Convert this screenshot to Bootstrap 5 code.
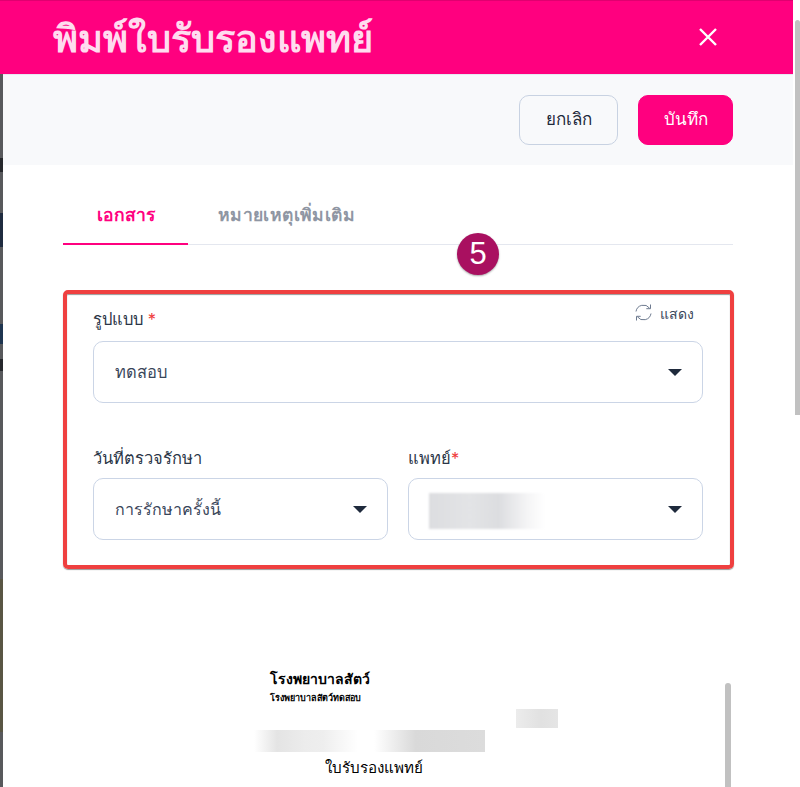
<!DOCTYPE html>
<html lang="th">
<head>
  <meta charset="UTF-8" />
  <meta name="viewport" content="width=device-width, initial-scale=1" />
  <title>พิมพ์ใบรับรองแพทย์</title>
  <link href="https://cdn.jsdelivr.net/npm/bootstrap@5.3.0/dist/css/bootstrap.min.css" rel="stylesheet" />
  <style>
    html, body { height: 787px; overflow: hidden; }
    body {
      background: #fff;
      color: #1f2a3c;
      font-family: Inter, "Noto Sans", "Liberation Sans", sans-serif;
      font-size: 16px;
    }
    .page-wrap { height: 787px; overflow: hidden; }
    .modal-col { width: 793px; flex: none; }
    .page-scroll { width: 7px; flex: none; padding: 20px 0 0 2px; }
    .page-thumb { height: 395px; background: #c1c1c1; border-radius: 3px 3px 0 0; }
    .print-head {
      height: 74px;
      background: #ff007f;
      border-top: 1px solid #e00070;
      padding: 0 76px 0 53px;
    }
    .print-title {
      font-size: 38px;
      line-height: 1;
      font-weight: 700;
      color: #ffdcef;
      margin: 0;
    }
    .close-x { border: 0; background: none; padding: 0; line-height: 0; margin-top: -2px; }
    .body-row { height: 713px; }
    .backdrop-strip {
      width: 3px;
      flex: none;
      background: linear-gradient(#58595c 0 84px, #26282c 84px 98px, #58595c 98px 139px, #1f2b3f 139px 173px, #58595c 173px 250px, #1f3550 250px 270px, #58595c 270px 285px, #26282c 285px 297px, #58595c 297px 505px, #595644 505px 658px, #58595c 658px);
    }
    .main-col { min-width: 0; flex: 1; }
    .action-bar {
      height: 91px;
      background: #f8f9fb;
      border-top: 1px solid #e6e9f2;
      padding: 20px 60px 0 0;
    }
    .btn-cancel, .btn-save {
      height: 50px;
      border-radius: 10px;
      font-size: 17px;
      font-weight: 500;
      padding: 0;
    }
    .btn-cancel { width: 99px; background: #f8f9fb; border: 1px solid #c8d2e2; color: #1f2a3c; }
    .btn-save { width: 95px; background: #ff007f; border: 1px solid #ff007f; color: #fff; }
    .btn-save:hover { background: #ff007f; color: #fff; }
    .content-area { padding: 0 60px; position: relative; }
    .tab-row { height: 80px; border-bottom: 1px solid #e4e7ef; margin: 0; }
    .tab-row .nav-link {
      height: 80px;
      border: 0;
      border-bottom: 2px solid transparent;
      border-radius: 0;
      padding: 0;
      font-size: 17.5px;
      font-weight: 700;
      color: #8f96a3;
      text-align: center;
      background: none;
      line-height: 100px;
    }
    .tab-one { width: 125px; }
    .tab-two { width: 197px; letter-spacing: .4px; }
    .tab-row .nav-link.active { color: #ff007f; border-bottom-color: #ff007f; }
    .step-badge {
      position: absolute;
      left: 454px;
      top: 68px;
      width: 42px;
      height: 42px;
      border-radius: 50%;
      background: #a91060;
      box-shadow: 0 1px 2px rgba(0,0,0,.35);
      color: #fff;
      font-family: "Liberation Sans", sans-serif;
      font-size: 31px;
      line-height: 42px;
      text-align: center;
    }
    .marked-box {
      margin-top: 45px;
      height: 279px;
      width: 671px;
      border: 4px solid #ef4040;
      border-radius: 5px;
      box-shadow: inset 0 1px 1px rgba(0,0,0,.4), 0 1px 1px rgba(0,0,0,.4);
      padding: 9px 27px 0 26px;
    }
    .field-label {
      font-size: 16.5px;
      line-height: 24px;
      color: #2b3647;
      margin: 0;
      height: 38px;
      padding-top: 4px;
    }
    .date-row .field-label { padding-top: 6px; }
    .req { color: #ef4040; }
    .show-link { font-size: 14px; font-weight: 500; color: #39465a; padding-right: 9px; line-height: 24px; margin-top: -1px; }
    .show-link svg { margin-right: 7px; vertical-align: -3px; }
    .form-select.pick {
      height: 62px;
      border: 1px solid #cbd5e6;
      border-radius: 10px;
      color: #39465a;
      font-size: 16.5px;
      padding: 0 40px 0 21px;
      background-image: url("data:image/svg+xml,%3Csvg xmlns='http://www.w3.org/2000/svg' width='14' height='8'%3E%3Cpath fill='%231f2a3c' d='M0 1h14L7 8z'/%3E%3C/svg%3E");
      background-size: 14px 8px;
      background-position: right 20px center;
    }
    .date-row { margin-top: 37px; gap: 20px; }
    .date-row > div { width: 295px; position: relative; }
    .date-row .form-select.pick { font-size: 16px; }
    .doc-blur {
      position: absolute;
      left: 21px;
      top: 53px;
      width: 116px;
      height: 36px;
      background: linear-gradient(90deg, #dcdde0 0, #e3e4e6 35%, #dcdde0 60%, #f5f5f6 85%, #fff 100%);
      filter: blur(1px);
    }
    .preview-wrap {
      position: relative;
      height: 218px;
      overflow: hidden;
      padding: 102px 0 0 207px;
      font-family: "Liberation Serif", serif;
      color: #000;
    }
    .clinic-name { font-size: 14px; font-weight: 700; line-height: 18px; margin: 0; }
    .clinic-sub { font-size: 9px; font-weight: 700; line-height: 12px; margin: 3px 0 0; }
    .blur-tag { position: absolute; left: 453px; top: 140px; width: 42px; height: 19px; background: linear-gradient(90deg, #ececec, #e1e1e1 60%, #e5e5e5); }
    .blur-row { position: absolute; left: 191px; top: 161px; width: 231px; height: 22px; background: linear-gradient(90deg, #fff 0, #e4e4e4 10%, #ececec 22%, #eee 30%, #fff 45%, #fff 52%, #d9d9d9 70%, #dcdcdc 100%); }
    .cert-title { position: absolute; left: 262px; top: 188px; font-size: 15.2px; line-height: 22px; }
    .inner-thumb { position: absolute; left: 662px; top: 114px; width: 6px; height: 110px; background: #c1c1c1; border-radius: 3px 3px 0 0; }
  </style>
</head>
<body>
  <div class="page-wrap d-flex">
    <div class="modal-col">
      <div class="print-head d-flex align-items-center justify-content-between">
        <h1 class="print-title">พิมพ์ใบรับรองแพทย์</h1>
        <button type="button" class="close-x" aria-label="ปิด">
          <svg width="18" height="18" viewBox="0 0 18 18" fill="none" stroke="#fff" stroke-width="2.4"><path d="M1 1l16 16M17 1L1 17"/></svg>
        </button>
      </div>
      <div class="body-row d-flex">
        <div class="backdrop-strip"></div>
        <div class="main-col">
          <div class="action-bar d-flex justify-content-end gap-3">
            <button type="button" class="btn btn-cancel me-1">ยกเลิก</button>
            <button type="button" class="btn btn-save">บันทึก</button>
          </div>
          <div class="content-area">
            <ul class="nav tab-row">
              <li class="nav-item"><a class="nav-link active tab-one" href="#">เอกสาร</a></li>
              <li class="nav-item"><a class="nav-link tab-two" href="#">หมายเหตุเพิ่มเติม</a></li>
            </ul>
            <div class="step-badge">5</div>
            <div class="marked-box">
              <div class="d-flex justify-content-between">
                <label class="field-label">รูปแบบ <span class="req">*</span></label>
                <span class="show-link">
                  <svg width="19" height="19" viewBox="0 0 19 19" fill="none" stroke="#6d7a8f" stroke-width="1"><path d="M2 8.5A7.6 7.6 0 0 1 15.6 5.2M17 10.5A7.6 7.6 0 0 1 3.4 13.8"/><path d="M16.5 1.5v4.2h-4.2M2.5 17.5v-4.2h4.2"/></svg>แสดง
                </span>
              </div>
              <select class="form-select pick"><option>ทดสอบ</option></select>
              <div class="d-flex date-row">
                <div>
                  <label class="field-label d-block">วันที่ตรวจรักษา</label>
                  <select class="form-select pick"><option>การรักษาครั้งนี้</option></select>
                </div>
                <div>
                  <label class="field-label d-block">แพทย์<span class="req">*</span></label>
                  <select class="form-select pick"><option></option></select>
                  <div class="doc-blur"></div>
                </div>
              </div>
            </div>
            <div class="preview-wrap">
              <p class="clinic-name">โรงพยาบาลสัตว์</p>
              <p class="clinic-sub">โรงพยาบาลสัตว์ทดสอบ</p>
              <div class="blur-tag"></div>
              <div class="blur-row"></div>
              <div class="cert-title">ใบรับรองแพทย์</div>
              <div class="inner-thumb"></div>
            </div>
          </div>
        </div>
      </div>
    </div>
    <div class="page-scroll"><div class="page-thumb"></div></div>
  </div>
  <script src="https://cdn.jsdelivr.net/npm/bootstrap@5.3.0/dist/js/bootstrap.bundle.min.js"></script>
</body>
</html>
